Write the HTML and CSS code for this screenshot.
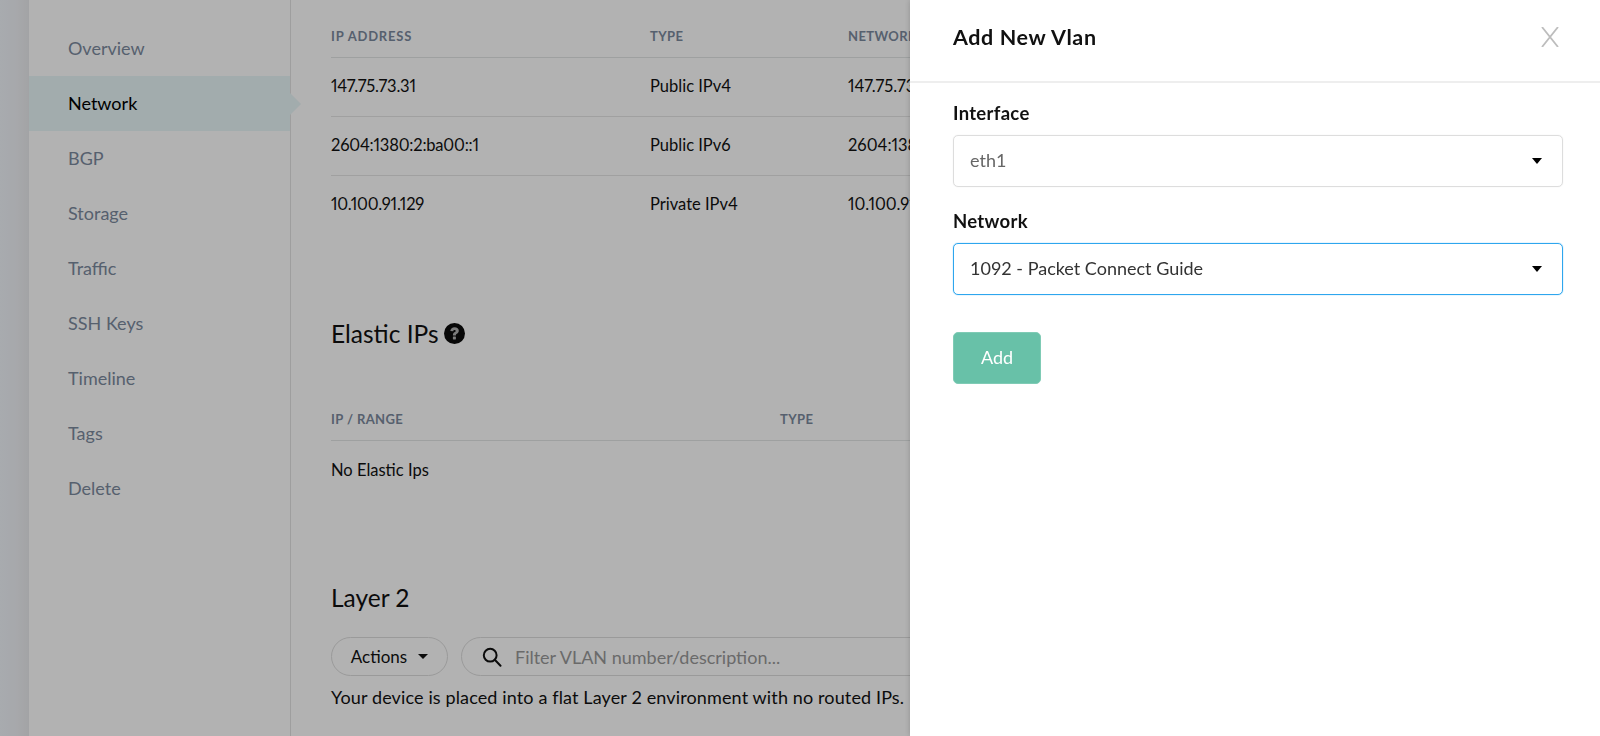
FILE: index.html
```html
<!DOCTYPE html>
<html>
<head>
<meta charset="utf-8">
<title>Network</title>
<link rel="stylesheet" href="styles.css">
</head>
<body>

<div class="page">
  <div class="strip"></div>

  <nav class="sidebar">
    <a class="nav-item">Overview</a>
    <a class="nav-item active">Network</a>
    <a class="nav-item">BGP</a>
    <a class="nav-item">Storage</a>
    <a class="nav-item">Traffic</a>
    <a class="nav-item">SSH Keys</a>
    <a class="nav-item">Timeline</a>
    <a class="nav-item">Tags</a>
    <a class="nav-item">Delete</a>
  </nav>

  <main class="content">
    <table class="ip-table">
      <thead>
        <tr><th class="col-ip">IP ADDRESS</th><th class="col-type">TYPE</th><th>NETWORK</th></tr>
      </thead>
      <tbody>
        <tr><td>147.75.73.31</td><td>Public IPv4</td><td>147.75.73</td></tr>
        <tr><td>2604:1380:2:ba00::1</td><td>Public IPv6</td><td>2604:1380</td></tr>
        <tr><td>10.100.91.129</td><td>Private IPv4</td><td>10.100.91</td></tr>
      </tbody>
    </table>

    <h2 class="elastic-title">Elastic IPs
      <svg class="help" width="21" height="21" viewBox="0 0 21 21">
        <circle cx="10.5" cy="10.5" r="10.5" fill="#0c0c0c"/>
        <path d="M6.300 8c.2-2.300 2-3.700 4.300-3.700 2.500 0 4.200 1.400 4.200 3.500 0 1.500-.8 2.300-1.900 3-.8.5-1 .8-1 1.600H8.900c0-1.600.4-2.400 1.500-3.100.9-.6 1.300-.9 1.300-1.400 0-.6-.5-1-1.200-1-.7 0-1.200.5-1.300 1.300z" fill="#b2b2b2"/>
        <rect x="8.900" y="13.500" width="3" height="2.900" rx=".4" fill="#b2b2b2"/>
      </svg>
    </h2>

    <table class="elastic-table">
      <thead>
        <tr><th class="col-range">IP / RANGE</th><th>TYPE</th></tr>
      </thead>
      <tbody>
        <tr><td>No Elastic Ips</td><td></td></tr>
      </tbody>
    </table>

    <h2 class="layer-title">Layer 2</h2>

    <div class="toolbar">
      <button class="actions">Actions <span class="caret"></span></button>
      <div class="filter">
        <svg width="20" height="20" viewBox="0 0 20 20" fill="none" stroke="#111" stroke-width="2">
          <circle cx="8.200" cy="8.200" r="6.400"/>
          <path d="M12.800 12.800l5.700 6" stroke-linecap="round"/>
        </svg>
        <span>Filter VLAN number/description...</span>
      </div>
    </div>
    <p class="layer-note">Your device is placed into a flat Layer 2 environment with no routed IPs.</p>
  </main>
</div>

<div class="overlay"></div>

<aside class="panel">
  <header class="panel-head">
    <h3>Add New Vlan</h3>
    <svg class="close" width="20" height="20" viewBox="0 0 20 20" stroke="#bdbdbd" stroke-width="1.800" fill="none">
      <path d="M2 0l16 20M18 0L2 20"/>
    </svg>
  </header>
  <form class="panel-body">
    <label>Interface</label>
    <div class="select"><span class="muted">eth1</span><span class="arrow"></span></div>
    <label>Network</label>
    <div class="select focus"><span>1092 - Packet Connect Guide</span><span class="arrow"></span></div>
    <button type="button" class="add">Add</button>
  </form>
</aside>

</body>
</html>
```

FILE: styles.css
```css
html, body {
  margin: 0;
  height: 100%;
  overflow: hidden;
}

body {
  font-family: Lato, "Open Sans", sans-serif;
  font-size: 16px;
  color: #111;
  background-color: #fff;
}

.page {
  display: flex;
  height: 736px;
}

.strip {
  width: 29px;
  flex-shrink: 0;
  background: linear-gradient(to right, #f1f5fb, #eff1f5 60%, #e9eaed);
}

/* Sidebar */
.sidebar {
  width: 261px;
  flex-shrink: 0;
  padding-top: 21px;
  border-right: 1px solid #e2e2e2;
}

.nav-item {
  position: relative;
  display: block;
  height: 55px;
  line-height: 54px;
  padding-left: 39px;
  font-size: 18px;
  color: #7c8a9e;
}

.nav-item.active {
  color: #000;
  background-color: #e9f6f8;
}

.nav-item.active::after {
  content: "";
  position: absolute;
  right: -11px;
  top: 17px;
  border-left: 11px solid #e9f6f8;
  border-top: 11px solid transparent;
  border-bottom: 11px solid transparent;
}

/* Main */
.content {
  width: 579px;
  flex-shrink: 0;
  padding: 14px 0 0 40px;
  overflow: hidden;
}

table {
  border-collapse: collapse;
  table-layout: fixed;
  width: 1200px;
}

th {
  text-align: left;
  font-size: 13px;
  font-weight: 700;
  letter-spacing: 0.4px;
  color: #7c8a9e;
  padding: 0;
  height: 43px;
  border-bottom: 1px solid #e2e6e6;
}

td {
  box-sizing: border-box;
  padding: 0 0 2px;
  height: 59px;
  font-size: 16.5px;
  font-variant-numeric: proportional-nums;
  border-bottom: 1px solid #e6e6e6;
}

.ip-table td:first-child {
  letter-spacing: -0.2px;
}

.ip-table tbody tr:last-child td {
  border-bottom: none;
}

.col-ip { width: 319px; letter-spacing: 0.8px; }
.col-type { width: 198px; }
.col-range { width: 449px; }

h2 {
  margin: 0;
  font-size: 24.5px;
  font-weight: 400;
  color: #111;
}

.elastic-title {
  display: flex;
  align-items: center;
  gap: 5px;
  margin-top: 83px;
  height: 32px;
}

.elastic-table {
  margin-top: 48px;
}

.elastic-table th {
  height: 42px;
}

.elastic-table td {
  padding-bottom: 0;
  border-bottom: none;
}

.layer-title {
  margin-top: 83px;
  height: 32px;
  line-height: 32px;
}

.toolbar {
  display: flex;
  gap: 13px;
  margin-top: 23px;
}

.actions {
  display: flex;
  flex-shrink: 0;
  align-items: center;
  justify-content: center;
  gap: 11px;
  width: 117px;
  height: 39px;
  box-sizing: border-box;
  font-family: inherit;
  font-size: 17px;
  color: #111;
  background: none;
  border: 1px solid #ddd;
  border-radius: 20px;
}

.caret {
  border-top: 5px solid #111;
  border-left: 5px solid transparent;
  border-right: 5px solid transparent;
}

.filter {
  display: flex;
  flex-shrink: 0;
  align-items: center;
  gap: 13px;
  width: 900px;
  height: 39px;
  padding-left: 20px;
  box-sizing: border-box;
  font-size: 18px;
  color: #999;
  border: 1px solid #ddd;
  border-radius: 20px;
}

.layer-note {
  margin: 10px 0 0;
  font-size: 18px;
  letter-spacing: 0.13px;
  white-space: nowrap;
}

/* Panel */
.overlay {
  position: fixed;
  inset: 0;
  background-color: rgba(0, 0, 0, 0.3);
}

.panel {
  position: fixed;
  top: 0;
  right: 0;
  bottom: 0;
  width: 690px;
  background-color: #fff;
  box-shadow: 0 0 6px rgba(0, 0, 0, 0.2);
}

.panel-head {
  display: flex;
  align-items: center;
  justify-content: space-between;
  height: 83px;
  padding: 0 40px 8px 43px;
  box-sizing: border-box;
  border-bottom: 2px solid #eee;
}

.panel-head h3 {
  margin: 0;
  font-size: 21.5px;
  font-weight: 700;
  letter-spacing: 0.6px;
  color: #111;
}

.panel-body {
  padding: 18px 37px 0 43px;
}

label {
  display: block;
  font-size: 18.5px;
  font-weight: 700;
  letter-spacing: 0.3px;
  line-height: 24px;
  margin-bottom: 10px;
}

.select {
  display: flex;
  align-items: center;
  justify-content: space-between;
  height: 52px;
  padding: 0 20px 0 16px;
  margin-bottom: 22px;
  box-sizing: border-box;
  font-size: 18px;
  color: #333;
  border: 1px solid #ddd;
  box-shadow: 0 0 1px #ddd;
  border-radius: 5px;
}

.select span:first-child {
  padding-bottom: 2px;
}

.select.focus {
  border-color: #2ea6ee;
  box-shadow: 0 0 1px #2ea6ee;
}

.muted {
  color: #666;
}

.arrow {
  border-top: 6px solid #000;
  border-left: 5.5px solid transparent;
  border-right: 5.5px solid transparent;
}

.add {
  display: block;
  width: 88px;
  height: 52px;
  margin-top: 37px;
  padding: 0 0 2px;
  font-family: inherit;
  font-size: 18px;
  color: #fff;
  background-color: #68c1a8;
  border: 1px solid #7fcbb5;
  border-radius: 5px;
}
```
